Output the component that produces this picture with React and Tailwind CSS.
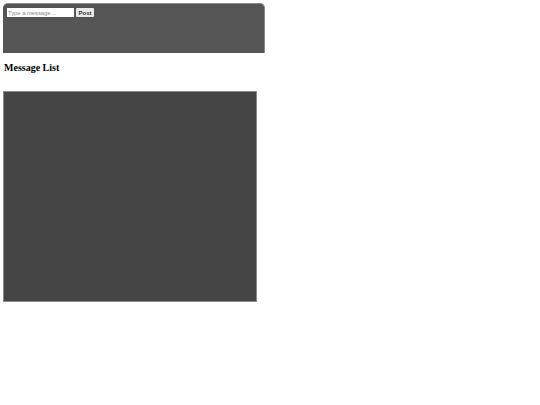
import React, { useState } from "react";

function Composer() {
  const [text, setText] = useState("");

  return (
    <div className="h-[50px] w-[262px] rounded-t-[5px] border-t border-r border-[#8a8a8a] bg-[#555555] px-[4px] pt-[4px] font-['Liberation_Sans',Arial,sans-serif]">
      <div className="flex items-center gap-[2px]">
        <input
          className="h-[9px] w-[67px] border-0 bg-white px-[1px] text-[5.8px] leading-none text-black outline-none placeholder:text-[#8a8a8a]"
          placeholder="Type a message..."
          value={text}
          onChange={(e) => setText(e.target.value)}
        />
        <button className="h-[9px] w-[18px] rounded-[1px] bg-[#e9e9e9] text-[6px] font-bold leading-none text-[#333]">
          Post
        </button>
      </div>
    </div>
  );
}

export default function App() {
  return (
    <div className="min-h-[405px] bg-white p-[3px] font-['Liberation_Serif',serif]">
      <Composer />
      <h2 className="mt-[9px] ml-[1px] text-[10px] font-bold leading-[12px] text-black">
        Message List
      </h2>
      <div className="mt-[17px] h-[211px] w-[254px] border border-[#8a8a8a] bg-[#454545]" />
    </div>
  );
}
